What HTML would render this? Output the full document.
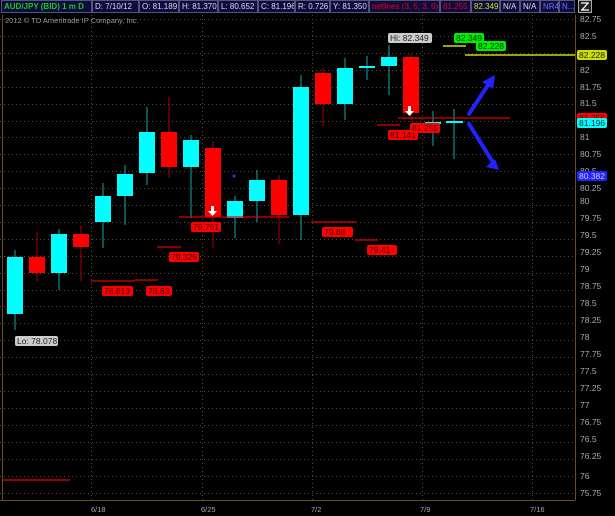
<!DOCTYPE html>
<html><head><meta charset="utf-8"><style>
body{margin:0;background:#000;width:615px;height:516px;overflow:hidden;font-family:"Liberation Sans",sans-serif}
.hd{position:absolute;top:0;height:13px;background:#0c0c40;border:1px solid #55557a;color:#ddd;font-size:8px;line-height:12px;padding:0 2px;box-sizing:border-box;white-space:nowrap;overflow:hidden}
</style></head><body>
<div class="hd" style="left:1px;width:91px;color:#1ec81e;font-weight:bold">AUD/JPY (BID) 1 m D</div>
<div class="hd" style="left:92px;width:47px">D: 7/10/12</div>
<div class="hd" style="left:139px;width:40px">O: 81.189</div>
<div class="hd" style="left:179px;width:39px">H: 81.370</div>
<div class="hd" style="left:218px;width:40px">L: 80.652</div>
<div class="hd" style="left:258px;width:37px">C: 81.196</div>
<div class="hd" style="left:295px;width:35px">R: 0.726</div>
<div class="hd" style="left:330px;width:39px">Y: 81.350</div>
<div class="hd" style="left:369px;width:71px;color:#e00">netlines (3, 5, 3, 0)</div>
<div class="hd" style="left:440px;width:31px;color:#e00">81.255</div>
<div class="hd" style="left:471px;width:29px;color:#d8e000">82.349</div>
<div class="hd" style="left:500px;width:20px">N/A</div>
<div class="hd" style="left:520px;width:20px">N/A</div>
<div class="hd" style="left:540px;width:19px;color:#7070ff">NR4</div>
<div class="hd" style="left:559px;width:16px;color:#7070ff">N...</div>
<svg width="14" height="13" style="position:absolute;left:578px;top:0"><rect x="0.5" y="0.5" width="13" height="12" fill="#222" stroke="#aaa"/><path d="M3 3h8M3 10h8M10 3L4 10" stroke="#fff" stroke-width="1.3" fill="none"/></svg>
<svg width="615" height="516" style="position:absolute;left:0;top:0" font-family="Liberation Sans, sans-serif">
<g stroke="#5a4a30" stroke-dasharray="1,3" stroke-width="1">
<line x1="0" x2="575" y1="19.5" y2="19.5"/><line x1="0" x2="575" y1="36.5" y2="36.5"/><line x1="0" x2="575" y1="53.5" y2="53.5"/><line x1="0" x2="575" y1="70.5" y2="70.5"/><line x1="0" x2="575" y1="87.5" y2="87.5"/><line x1="0" x2="575" y1="104.5" y2="104.5"/><line x1="0" x2="575" y1="121.5" y2="121.5"/><line x1="0" x2="575" y1="137.5" y2="137.5"/><line x1="0" x2="575" y1="154.5" y2="154.5"/><line x1="0" x2="575" y1="171.5" y2="171.5"/><line x1="0" x2="575" y1="188.5" y2="188.5"/><line x1="0" x2="575" y1="205.5" y2="205.5"/><line x1="0" x2="575" y1="222.5" y2="222.5"/><line x1="0" x2="575" y1="239.5" y2="239.5"/><line x1="0" x2="575" y1="256.5" y2="256.5"/><line x1="0" x2="575" y1="273.5" y2="273.5"/><line x1="0" x2="575" y1="290.5" y2="290.5"/><line x1="0" x2="575" y1="306.5" y2="306.5"/><line x1="0" x2="575" y1="323.5" y2="323.5"/><line x1="0" x2="575" y1="340.5" y2="340.5"/><line x1="0" x2="575" y1="357.5" y2="357.5"/><line x1="0" x2="575" y1="374.5" y2="374.5"/><line x1="0" x2="575" y1="391.5" y2="391.5"/><line x1="0" x2="575" y1="408.5" y2="408.5"/><line x1="0" x2="575" y1="425.5" y2="425.5"/><line x1="0" x2="575" y1="442.5" y2="442.5"/><line x1="0" x2="575" y1="459.5" y2="459.5"/><line x1="0" x2="575" y1="476.5" y2="476.5"/><line x1="0" x2="575" y1="493.5" y2="493.5"/>
<line x1="91.5" x2="91.5" y1="15" y2="500"/><line x1="202.5" x2="202.5" y1="15" y2="500"/><line x1="312.5" x2="312.5" y1="15" y2="500"/><line x1="422.5" x2="422.5" y1="15" y2="500"/><line x1="532.5" x2="532.5" y1="15" y2="500"/>
</g>
<line x1="2.5" x2="2.5" y1="15" y2="500" stroke="#6a5020"/>
<line x1="575.5" x2="575.5" y1="15" y2="500" stroke="#6a5020"/>
<line x1="0" x2="575" y1="500.5" y2="500.5" stroke="#6a5020"/>
<text x="5" y="23" font-size="7.5" fill="#999">2012 © TD Ameritrade IP Company, Inc.</text>
<g font-size="8.5" fill="#aaa">
<text x="580" y="39">82.5</text><text x="580" y="22">82.75</text><text x="580" y="73">82</text><text x="580" y="90">81.75</text><text x="580" y="106">81.5</text><text x="580" y="140">81</text><text x="580" y="157">80.75</text><text x="580" y="174">80.5</text><text x="580" y="191">80.25</text><text x="580" y="204">80</text><text x="580" y="221">79.75</text><text x="580" y="238">79.5</text><text x="580" y="255">79.25</text><text x="580" y="272">79</text><text x="580" y="289">78.75</text><text x="580" y="306">78.5</text><text x="580" y="323">78.25</text><text x="580" y="340">78</text><text x="580" y="357">77.75</text><text x="580" y="374">77.5</text><text x="580" y="391">77.25</text><text x="580" y="408">77</text><text x="580" y="425">76.75</text><text x="580" y="442">76.5</text><text x="580" y="459">76.25</text><text x="580" y="479">76</text><text x="580" y="496">75.75</text>
<text x="91" y="512" font-size="7.5">6/18</text><text x="201" y="512" font-size="7.5">6/25</text><text x="311" y="512" font-size="7.5">7/2</text><text x="420" y="512" font-size="7.5">7/9</text><text x="530" y="512" font-size="7.5">7/16</text>
</g>
<g stroke-width="1">
<line x1="15" x2="15" y1="250" y2="330" stroke="#1aa"/><rect x="7" y="257" width="16" height="57" fill="#0ff"/>
<line x1="37" x2="37" y1="232" y2="282" stroke="#a00"/><rect x="29" y="257" width="16" height="16" fill="#f00"/>
<line x1="59" x2="59" y1="229" y2="290" stroke="#1aa"/><rect x="51" y="234" width="16" height="39" fill="#0ff"/>
<line x1="81" x2="81" y1="225" y2="281" stroke="#a00"/><rect x="73" y="234" width="16" height="13" fill="#f00"/>
<line x1="103" x2="103" y1="183" y2="248" stroke="#1aa"/><rect x="95" y="196" width="16" height="26" fill="#0ff"/>
<line x1="125" x2="125" y1="165" y2="225" stroke="#1aa"/><rect x="117" y="174" width="16" height="22" fill="#0ff"/>
<line x1="147" x2="147" y1="107" y2="185" stroke="#1aa"/><rect x="139" y="132" width="16" height="41" fill="#0ff"/>
<line x1="169" x2="169" y1="97" y2="178" stroke="#a00"/><rect x="161" y="132" width="16" height="35" fill="#f00"/>
<line x1="191" x2="191" y1="135" y2="218" stroke="#1aa"/><rect x="183" y="140" width="16" height="27" fill="#0ff"/>
<line x1="213" x2="213" y1="141" y2="248" stroke="#a00"/><rect x="205" y="148" width="16" height="69" fill="#f00"/>
<line x1="235" x2="235" y1="196" y2="238" stroke="#1aa"/><rect x="227" y="201" width="16" height="17" fill="#0ff"/>
<line x1="257" x2="257" y1="170" y2="222" stroke="#1aa"/><rect x="249" y="180" width="16" height="21" fill="#0ff"/>
<line x1="279" x2="279" y1="175" y2="244" stroke="#a00"/><rect x="271" y="180" width="16" height="35" fill="#f00"/>
<line x1="301" x2="301" y1="75" y2="240" stroke="#1aa"/><rect x="293" y="87" width="16" height="128" fill="#0ff"/>
<line x1="323" x2="323" y1="68" y2="126" stroke="#a00"/><rect x="315" y="73" width="16" height="31" fill="#f00"/>
<line x1="345" x2="345" y1="58" y2="120" stroke="#1aa"/><rect x="337" y="68" width="16" height="36" fill="#0ff"/>
<line x1="367" x2="367" y1="56" y2="80" stroke="#1aa"/><rect x="359" y="66" width="16" height="2" fill="#0ff"/>
<line x1="389" x2="389" y1="45" y2="95" stroke="#1aa"/><rect x="381" y="57" width="16" height="9" fill="#0ff"/>
<line x1="411" x2="411" y1="54" y2="120" stroke="#a00"/><rect x="403" y="57" width="16" height="56" fill="#f00"/>
<line x1="433" x2="433" y1="111" y2="146" stroke="#1aa"/><rect x="425" y="122" width="16" height="2" fill="#0ff"/>
<line x1="454" x2="454" y1="109" y2="159" stroke="#1aa"/><rect x="446" y="121" width="17" height="2" fill="#0ff"/>
</g>
<circle cx="234" cy="176" r="1.5" fill="#33f"/>
<g stroke="#d00" stroke-width="1.3">
<line x1="91" x2="135" y1="281" y2="281"/><line x1="135" x2="158" y1="280" y2="280"/><line x1="157" x2="181" y1="247" y2="247"/><line x1="179" x2="289" y1="217" y2="217"/><line x1="311" x2="356" y1="222" y2="222"/><line x1="355" x2="378" y1="240" y2="240"/><line x1="377" x2="400" y1="125" y2="125"/><line x1="398" x2="510" y1="118" y2="118"/>
</g>
<line x1="443" x2="466" y1="46" y2="46" stroke="#cce000" stroke-width="1.5"/>
<line x1="465" x2="575" y1="55" y2="55" stroke="#cce000" stroke-width="1.5"/>
<line x1="3" x2="70" y1="480" y2="480" stroke="#c00" stroke-width="1.5"/>
<g font-size="8.5">
<rect x="102" y="286" width="31" height="10" rx="2" fill="#f00"/><text x="104" y="294" fill="#400">78.813</text>
<rect x="146" y="286" width="26" height="10" rx="2" fill="#f00"/><text x="148" y="294" fill="#400">78.83</text>
<rect x="169" y="252" width="30" height="10" rx="2" fill="#f00"/><text x="171" y="260" fill="#400">79.325</text>
<rect x="191" y="222" width="30" height="10" rx="2" fill="#f00"/><text x="193" y="230" fill="#400">79.761</text>
<rect x="322" y="227" width="31" height="10" rx="2" fill="#f00"/><text x="324" y="235" fill="#400">79.88</text>
<rect x="367" y="245" width="30" height="10" rx="2" fill="#f00"/><text x="369" y="253" fill="#400">79.41</text>
<rect x="388" y="130" width="30" height="10" rx="2" fill="#f00"/><text x="390" y="138" fill="#400">81.141</text>
<rect x="410" y="123" width="30" height="10" rx="2" fill="#f00"/><text x="412" y="131" fill="#400">81.255</text>
<rect x="15" y="336" width="43" height="10" rx="2" fill="#ccc"/><text x="17" y="344" fill="#222">Lo: 78.078</text>
<rect x="388" y="33" width="44" height="10" rx="2" fill="#ccc"/><text x="390" y="41" fill="#222">Hi: 82.349</text>
<rect x="454" y="33" width="30" height="10" rx="2" fill="#0e0"/><text x="456" y="41" fill="#030">82.349</text>
<rect x="476" y="41" width="30" height="10" rx="2" fill="#0e0"/><text x="478" y="49" fill="#030">82.228</text>
<rect x="577" y="50" width="30" height="10" rx="2" fill="#cde000"/><text x="579" y="58" fill="#220">82.228</text>
<rect x="577" y="113" width="30" height="10" rx="2" fill="#f00"/><text x="579" y="121" fill="#400">81.255</text>
<rect x="577" y="118" width="30" height="10" rx="2" fill="#0ff"/><text x="579" y="126" fill="#033">81.196</text>
<rect x="577" y="171" width="30" height="10" rx="2" fill="#22f"/><text x="579" y="179" fill="#ccf">80.382</text>
</g>
<g fill="#fff"><path d="M211 206h3v5h3l-4.5 5-4.5-5h3z"/><path d="M408 106h3v5h3l-4.5 5-4.5-5h3z"/></g>
<g stroke="#22f" stroke-width="4" fill="none" stroke-linecap="round">
<line x1="469" y1="114" x2="490" y2="82"/><line x1="469" y1="124" x2="494" y2="164"/></g>
<path d="M495 75l-2 14-11-7z" fill="#22f"/><path d="M499 170l-13-3 9-8z" fill="#22f"/>
</svg>
</body></html>
